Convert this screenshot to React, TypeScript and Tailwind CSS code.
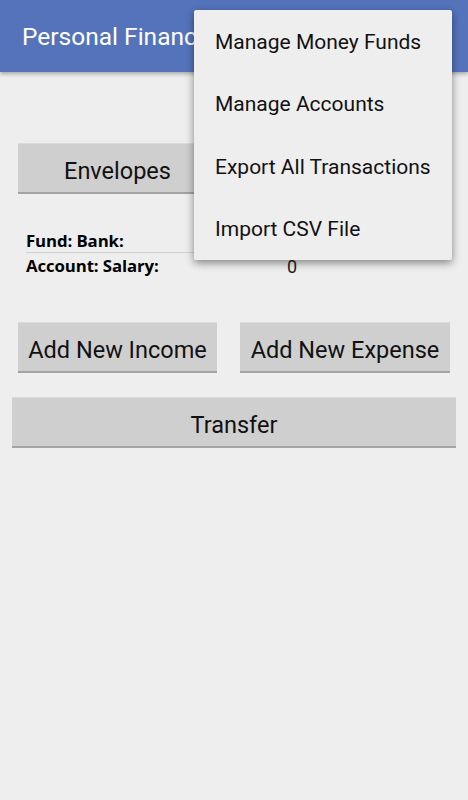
import React from 'react';

const menuItems = ['Manage Money Funds', 'Manage Accounts', 'Export All Transactions', 'Import CSV File'];

function HoloButton({ label, className = '' }: { label?: string; className?: string }) {
  return (
    <button className={`h-[51px] pt-[7px] bg-[#cfcfcf] border-t border-t-[#dadada] border-b-2 border-b-[#a3a3a3] text-[23.5px] text-[#111] leading-none ${className}`}>
      {label}
    </button>
  );
}

export default function App() {
  return (
    <div className="relative w-[468px] h-[800px] bg-[#eeeeee] overflow-hidden font-['Roboto',sans-serif]">
      <header className="h-[72px] bg-[#5473bb] flex items-center pl-[22px] shadow-[0_2px_4px_rgba(0,0,0,0.3)] relative z-10">
        <h1 className="text-white text-[24.5px] pt-[2px] whitespace-nowrap">Personal Finance</h1>
      </header>

      <div className="pt-[71px] px-[18px] flex justify-between">
        <HoloButton label="Envelopes" className="w-[199px]" />
        <HoloButton className="w-[210px]" />
      </div>

      <div className="mt-[34px] mx-[26px] text-black">
        <div className="h-[25px] pt-[1px] flex items-center border-b border-[#d0d0d0]">
          <span className="w-[261px] font-bold font-['Open_Sans',sans-serif] text-[16.8px] tracking-[-0.1px]">Fund: Bank:</span>
        </div>
        <div className="h-[25px] pt-[1px] flex items-center">
          <span className="w-[261px] font-bold font-['Open_Sans',sans-serif] text-[16.8px] tracking-[-0.1px]">Account: Salary:</span>
          <span className="text-[18px] text-[#222]">0</span>
        </div>
      </div>

      <div className="mt-[44px] px-[18px] flex justify-between">
        <HoloButton label="Add New Income" className="w-[199px]" />
        <HoloButton label="Add New Expense" className="w-[210px]" />
      </div>

      <div className="mt-[24px] px-[12px]">
        <HoloButton label="Transfer" className="w-full" />
      </div>

      <div className="absolute top-[10px] left-[194px] w-[258px] bg-[#eeeeee] rounded-[2px] shadow-[0_3px_8px_rgba(0,0,0,0.45)] z-20">
        {menuItems.map((item) => (
          <div key={item} className="h-[62.5px] pt-[2px] flex items-center pl-[21px] text-[21px] text-[#111] whitespace-nowrap">
            {item}
          </div>
        ))}
      </div>
    </div>
  );
}
